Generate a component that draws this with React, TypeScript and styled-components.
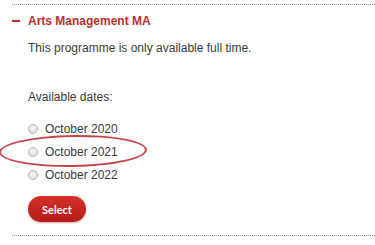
import styled, { createGlobalStyle } from "styled-components";

const Global = createGlobalStyle`
html, body {
  margin: 0;
  padding: 0;
  background: #fff;
}
body {
  font-family: Arial, "Liberation Sans", sans-serif;
  color: #333;
}
`

const Wrap = styled.div`
padding: 4px 0 0 12px;
`

const Section = styled.section`
border-top: 1px dotted #9a9a9a;
border-bottom: 1px dotted #9a9a9a;
padding-bottom: 13px;
`

const Header = styled.div`
display: flex;
align-items: center;
padding-top: 8px;
height: 16px;
`

const Dash = styled.span`
display: block;
width: 8px;
height: 2px;
background: #c0302e;
margin-right: 8px;
`

const Title = styled.h3`
margin: 0;
font-size: 12px;
line-height: 16px;
font-weight: bold;
color: #b8312f;
`

const Body = styled.div`
padding-left: 16px;
`

const Text = styled.p<{ $top: number }>`
margin: ${p => p.$top}px 0 0;
font-size: 12px;
line-height: 16px;
color: #3a3a3a;
`

const Options = styled.div`
margin-top: 12px;
display: flex;
flex-direction: column;
`

const Option = styled.label`
position: relative;
display: flex;
align-items: center;
height: 23px;
font-size: 12px;
color: #3a3a3a;
`

const Radio = styled.span`
display: block;
box-sizing: border-box;
width: 10px;
height: 10px;
border-radius: 50%;
border: 1px solid #b4b4b4;
background: radial-gradient(circle at 50% 40%, #f6f6f6, #dadada);
margin-right: 7px;
`

const Circle = styled.span`
position: absolute;
left: -29px;
top: -5px;
width: 148px;
height: 32px;
border: 2.5px solid #c5444c;
border-radius: 50%;
box-sizing: border-box;
transform: rotate(-1deg);
pointer-events: none;
`

const Button = styled.button`
margin-top: 10px;
width: 58px;
height: 26px;
border: none;
border-radius: 13px;
background: linear-gradient(#d4302a, #b41c18);
box-shadow: 0 1px 2px rgba(120, 0, 0, 0.35);
color: #fff;
font-family: Lato, "Open Sans", sans-serif;
font-weight: bold;
font-size: 11px;
padding: 0;
cursor: pointer;
`

const dates = ["October 2020", "October 2021", "October 2022"];

export default function App() {
    return (<>
        <Global />
        <Wrap>
            <Section>
                <Header>
                    <Dash />
                    <Title>Arts Management MA</Title>
                </Header>
                <Body>
                    <Text $top={11}>This programme is only available full time.</Text>
                    <Text $top={33}>Available dates:</Text>
                    <Options>
                        {dates.map(d => (
                            <Option key={d}>
                                {d === "October 2021" && <Circle />}
                                <Radio />
                                {d}
                            </Option>
                        ))}
                    </Options>
                    <Button>Select</Button>
                </Body>
            </Section>
        </Wrap>
    </>);
}
